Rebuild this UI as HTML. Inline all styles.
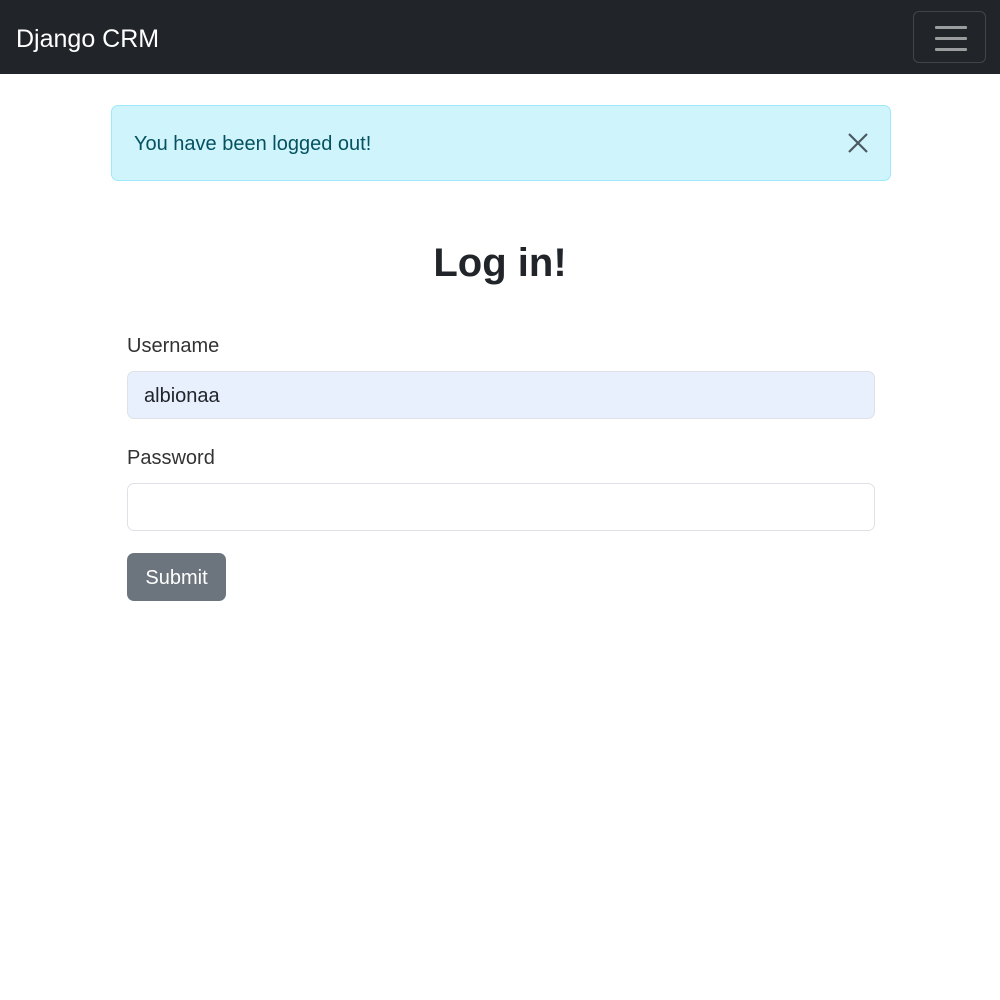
<!DOCTYPE html>
<html><head><meta charset="utf-8"><style>
*{box-sizing:border-box;margin:0;padding:0}
body{width:1000px;height:1000px;background:#fff;font-family:"Liberation Sans",sans-serif;color:#212529;position:relative;overflow:hidden}
.nav{position:absolute;left:0;top:0;width:1000px;height:74px;background:#212529}
.brand{position:absolute;left:16px;top:23px;font-size:25px;color:#fff;line-height:32px}
.tog{position:absolute;left:913px;top:11px;width:73px;height:52px;border:1px solid rgba(255,255,255,.15);border-radius:6px}
.tog span{position:absolute;left:21px;width:32px;height:3px;background:rgba(255,255,255,.55);border-radius:1px}
.alert{position:absolute;left:111px;top:105px;width:780px;height:76px;background:#cff4fc;border:1px solid #9eeaf9;border-radius:7px;color:#055160;font-size:20px;line-height:76px;padding-left:22px}
.x{position:absolute;left:848px;top:133px;width:20px;height:20px}
h1{position:absolute;left:0;width:1000px;top:237px;text-align:center;font-size:40px;font-weight:bold;line-height:52px}
.lbl{position:absolute;left:127px;font-size:20px;line-height:26px;color:#333}
.inp{position:absolute;left:127px;width:748px;height:48px;border:1px solid #dee2e6;border-radius:7px;font-size:20px;line-height:48px;padding-left:16px}
.btn{position:absolute;left:127px;top:553px;width:99px;height:48px;background:#6c757d;border-radius:7px;color:#fff;font-size:20px;line-height:50px;text-align:center}
</style></head><body>
<div class="nav"><div class="brand">Django CRM</div>
<div class="tog"><span style="top:14px"></span><span style="top:25px"></span><span style="top:36px"></span></div></div>
<div class="alert">You have been logged out!</div>
<svg class="x" viewBox="0 0 20 20"><path d="M1 1L19 19M19 1L1 19" stroke="#4a5a60" stroke-width="2.2"/></svg>
<h1>Log in!</h1>
<div class="lbl" style="top:333px">Username</div>
<div class="inp" style="top:371px;background:#e8f0fe">albionaa</div>
<div class="lbl" style="top:445px">Password</div>
<div class="inp" style="top:483px"></div>
<div class="btn">Submit</div>
</body></html>
